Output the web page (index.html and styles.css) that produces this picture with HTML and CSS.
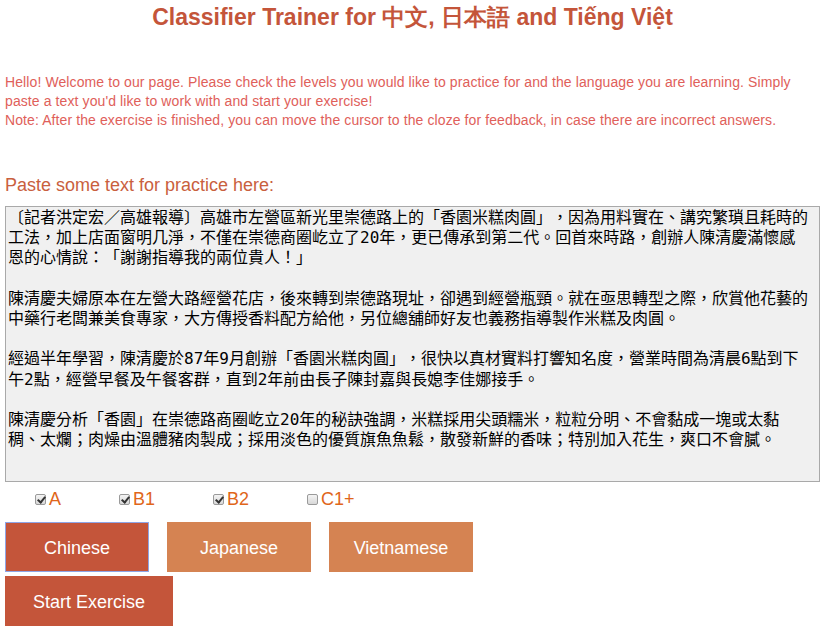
FILE: index.html
```html
<!DOCTYPE html>
<html lang="en">
<head>
<meta charset="utf-8">
<title>Classifier Trainer</title>
<link rel="stylesheet" href="styles.css">
</head>
<body>
<main class="page">
  <h1 class="title">Classifier Trainer for 中文, 日本語 and Tiếng Việt</h1>
  <p class="intro">Hello! Welcome to our page. Please check the levels you would like to practice for and the language you are learning. Simply paste a text you'd like to work with and start your exercise!<br>Note: After the exercise is finished, you can move the cursor to the cloze for feedback, in case there are incorrect answers.</p>
  <label class="paste-label" for="source">Paste some text for practice here:</label>
  <textarea id="source" class="source" spellcheck="false">〔記者洪定宏／高雄報導〕高雄市左營區新光里崇德路上的「香園米糕肉圓」，因為用料實在、講究繁瑣且耗時的工法，加上店面窗明几淨，不僅在崇德商圈屹立了20年，更已傳承到第二代。回首來時路，創辦人陳清慶滿懷感恩的心情說：「謝謝指導我的兩位貴人！」

陳清慶夫婦原本在左營大路經營花店，後來轉到崇德路現址，卻遇到經營瓶頸。就在亟思轉型之際，欣賞他花藝的中藥行老闆兼美食專家，大方傳授香料配方給他，另位總舖師好友也義務指導製作米糕及肉圓。

經過半年學習，陳清慶於87年9月創辦「香園米糕肉圓」，很快以真材實料打響知名度，營業時間為清晨6點到下午2點，經營早餐及午餐客群，直到2年前由長子陳封嘉與長媳李佳娜接手。

陳清慶分析「香園」在崇德路商圈屹立20年的秘訣強調，米糕採用尖頭糯米，粒粒分明、不會黏成一塊或太黏稠、太爛；肉燥由溫體豬肉製成；採用淡色的優質旗魚魚鬆，散發新鮮的香味；特別加入花生，爽口不會膩。</textarea>
  <div class="levels">
    <label class="level"><input type="checkbox" checked>A</label>
    <label class="level"><input type="checkbox" checked>B1</label>
    <label class="level"><input type="checkbox" checked>B2</label>
    <label class="level"><input type="checkbox">C1+</label>
  </div>
  <div class="actions">
    <div class="langs">
      <button class="btn lang active" type="button">Chinese</button>
      <button class="btn lang" type="button">Japanese</button>
      <button class="btn lang" type="button">Vietnamese</button>
    </div>
    <button class="btn start" type="button">Start Exercise</button>
  </div>
</main>
</body>
</html>
```

FILE: styles.css
```css
html, body {
  margin: 0;
  padding: 0;
  background: #ffffff;
}

body {
  font-family: "Liberation Sans", Arial, sans-serif;
}

.page {
  padding: 0 5px;
  width: 815px;
}

.title {
  margin: 4px 0 0;
  font-size: 23px;
  line-height: 26px;
  font-weight: bold;
  text-align: center;
  color: #c4553a;
}

.intro {
  margin: 43px 0 0;
  font-size: 14px;
  letter-spacing: 0.1px;
  line-height: 19px;
  color: #e0605a;
}

.paste-label {
  display: block;
  margin-top: 45px;
  font-size: 18px;
  line-height: 20px;
  color: #c9603e;
}

.source {
  display: block;
  box-sizing: border-box;
  margin: 11px 0 0;
  width: 815px;
  height: 276px;
  padding: 1px 10px 2px 2px;
  border: 1px solid #a9a9a9;
  background: #f0f0f0;
  color: #000;
  font-family: "DejaVu Sans Mono", "Noto Sans CJK TC", monospace;
  font-size: 16px;
  line-height: 20.2px;
  text-spacing-trim: space-all;
  resize: none;
  overflow: hidden;
  outline: none;
}

.levels {
  display: flex;
  gap: 58px;
  margin-top: 6px;
  padding-left: 30px;
  height: 22px;
  align-items: center;
}

.level {
  display: flex;
  align-items: center;
  font-size: 18px;
  color: #e0661a;
}

.level input {
  appearance: none;
  -webkit-appearance: none;
  box-sizing: border-box;
  width: 11px;
  height: 11px;
  margin: 1px 3px 0 0;
  border: 1px solid #9a9a9a;
  border-radius: 2px;
  background: linear-gradient(#f4f4f4, #d8d8d8);
  position: relative;
}

.level input:checked::after {
  content: "";
  position: absolute;
  left: 3px;
  top: 0px;
  width: 3px;
  height: 6px;
  border: solid #333;
  border-width: 0 2px 2px 0;
  transform: rotate(40deg);
}

.actions {
  display: flex;
  flex-direction: column;
  gap: 4px;
  margin-top: 12px;
}

.langs {
  display: flex;
  gap: 18px;
}

.btn {
  box-sizing: border-box;
  height: 50px;
  padding: 2px 0 0;
  border: 1px solid transparent;
  font-family: "Liberation Sans", Arial, sans-serif;
  font-size: 18px;
  color: #ffffff;
  cursor: pointer;
}

.lang {
  width: 144px;
  background: #d58352;
  border-color: #d58352;
}

.lang.active {
  background: #c4553a;
  border-color: #8fa5e6;
}

.start {
  align-self: flex-start;
  width: 168px;
  background: #c4553a;
  border-color: #c4553a;
}
```
